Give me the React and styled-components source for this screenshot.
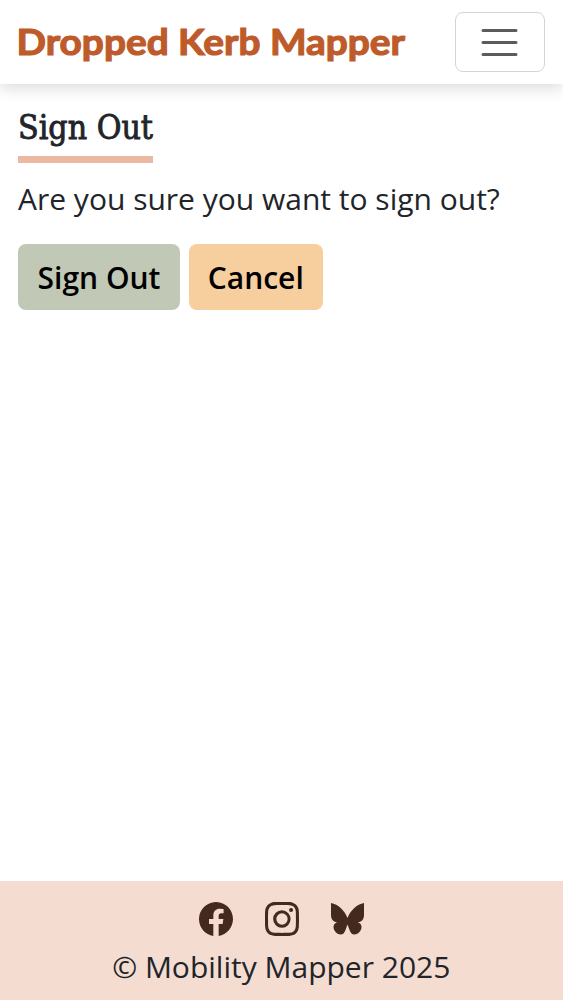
import React from "react";
import styled, { createGlobalStyle } from "styled-components";
import { BsFacebook, BsInstagram } from "react-icons/bs";

const Global = createGlobalStyle`
  *, *::before, *::after { box-sizing: border-box; }
  body { margin: 0; background: #fff; color: #212529; font-family: "Open Sans", "Noto Sans", sans-serif; font-size: 30px; line-height: 45px; }
`;
const Page = styled.div`
  display: flex; flex-direction: column; width: 562.5px; height: 1000.4px; overflow: hidden; background: #fff;
`;
const Navbar = styled.header`
  display: flex; flex: none; align-items: center; justify-content: space-between; height: 84px; padding: 0 18px;
  box-shadow: 0 4px 15px rgba(0, 0, 0, 0.15);
`;
const Brand = styled.svg`
  display: block; width: 389px; height: 50px; overflow: visible; fill: #be5b2b; stroke: #be5b2b; stroke-width: 1.2px;
  font-family: Lato, sans-serif; font-weight: 700; font-size: 37px;
`;
const Toggler = styled.button`
  display: flex; align-items: center; justify-content: center; width: 90px; height: 60px; padding: 0;
  border: 1.5px solid #d3d4d5; border-radius: 8px; background: #fff;
`;
const Main = styled.main`
  display: flex; flex: 1; flex-direction: column; align-items: flex-start; padding: 23px 18px 0;
`;
const Title = styled.h1`
  width: 135px; height: 56px; margin: 0 0 13px; border-bottom: 7px solid #ecb8a2; white-space: nowrap;
  font: 500 33px/40px "DejaVu Serif", serif;
  svg { display: block; width: 135px; height: 49px; overflow: visible; fill: #212529; stroke: #212529; stroke-width: 0.9px; }
`;
const Question = styled.p`margin: 0 0 22.8px; white-space: nowrap;`;
const Actions = styled.div`display: flex; gap: 8.5px;`;
const Button = styled.button`
  width: ${(p) => p.$width}px; height: 66px; padding: 2px 0 0; border: 0; border-radius: 8px;
  background: ${(p) => p.$color}; color: #000; font: 600 30px/45px "Open Sans", sans-serif; white-space: nowrap;
`;
const Footer = styled.footer`
  display: flex; flex: none; flex-direction: column; align-items: center; height: 119.4px; padding-top: 21px; background: #f5dcd1;
`;
const Social = styled.nav`
  display: flex; gap: 32px; height: 35px; margin-bottom: 7px; padding-left: 1px; color: #44291f;
  a { display: block; height: 34px; color: inherit; }
  svg { display: block; }
`;
const Copyright = styled.p`margin: 0; white-space: nowrap;`;

const Butterfly = () => (
  <svg width="34" height="34" viewBox="0 0 34 34" fill="currentColor">
    <path d="M0 1C7 2 14 9 16.5 16C19 9 26 2 33 1V13C33 18 30 20 26.5 20.5C30.500 21 31.500 25 29.500 28.500C27.500 32 23 34 20.500 31.500C18.500 29 17.500 25 16.500 22.500C15.500 25 14.500 29 12.500 31.500C10 34 5.500 32 3.500 28.500C1.500 25 2.500 21 6.500 20.500C3 20 0 18 0 13Z" />
  </svg>
);

export default function App() {
  return (
    <Page>
      <Global />
      <Navbar>
        <Brand><text x="-1.5" y="38" textLength="388.5" lengthAdjust="spacingAndGlyphs">Dropped Kerb Mapper</text></Brand>
        <Toggler aria-label="Menu">
          <svg width="45" height="45" viewBox="0 0 30 30" stroke="#595c5f" strokeWidth="2" strokeLinecap="round">
            <path d="M4 7h22M4 15h22M4 23h22" />
          </svg>
        </Toggler>
      </Navbar>
      <Main>
        <Title><svg><text x="0" y="32" textLength="135" lengthAdjust="spacingAndGlyphs">Sign Out</text></svg></Title>
        <Question>Are you sure you want to sign out?</Question>
        <Actions>
          <Button $width={162} $color="#c1c9b6">Sign Out</Button>
          <Button $width={134.5} $color="#f7cf9f">Cancel</Button>
        </Actions>
      </Main>
      <Footer>
        <Social>
          <a aria-label="Facebook"><BsFacebook size={34} /></a>
          <a aria-label="Instagram"><BsInstagram size={34} /></a>
          <a aria-label="Bluesky"><Butterfly /></a>
        </Social>
        <Copyright>© Mobility Mapper 2025</Copyright>
      </Footer>
    </Page>
  );
}
